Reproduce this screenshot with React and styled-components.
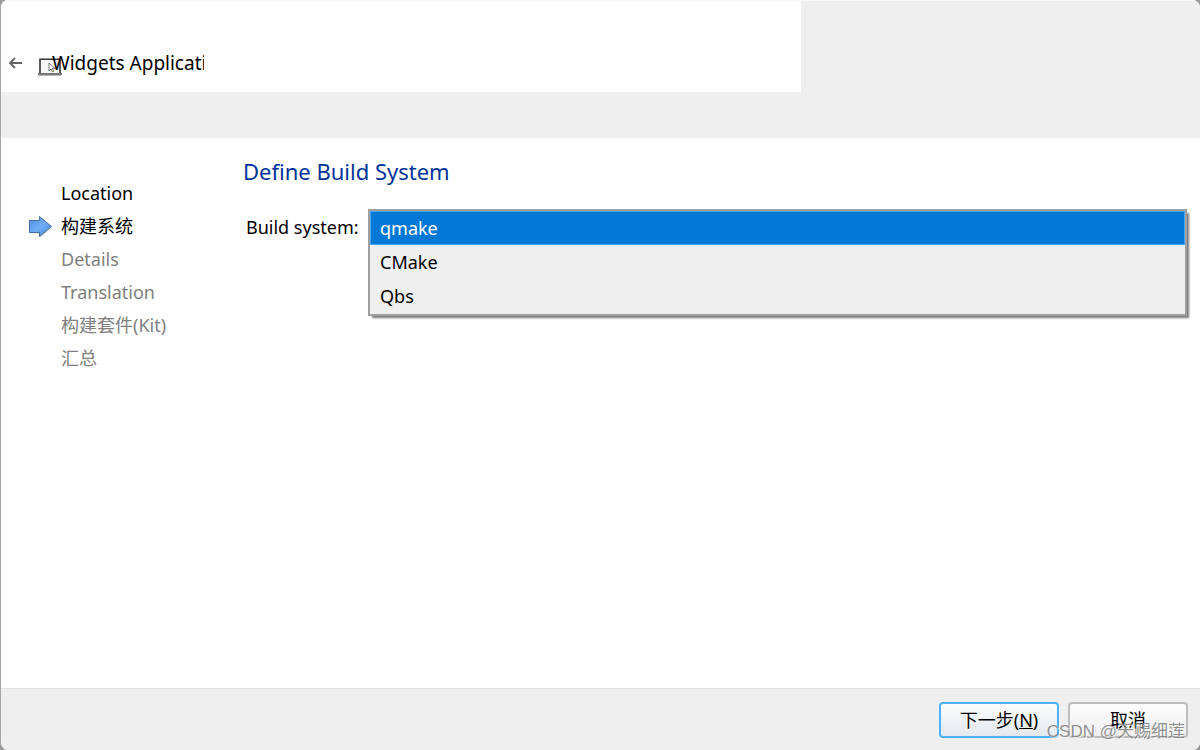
import React, { useState } from "react";
import styled, { createGlobalStyle } from "styled-components";

const GlobalStyle = createGlobalStyle`
    * {
        box-sizing: border-box;
    }

    body {
        margin: 0;
        background: #999;
        color: #000;
        font-family: "Noto Sans", "Noto Sans CJK SC", sans-serif;
        font-size: 18px;
    }
`;

const Window = styled.div`
    position: relative;
    display: flex;
    flex-direction: column;
    min-height: 100vh;
    overflow: hidden;
    background: #fff;
    border-left: 1px solid #a5a5a5;
    border-radius: 8px;
`;

const Header = styled.header`
    height: 138px;
    background: #efefef;
    border-top: 1px solid #f8f8f8;
`;

const TitleBar = styled.div`
    display: flex;
    align-items: center;
    width: 66.7%;
    height: 91px;
    padding: 32px 0 0 7px;
    background: #fff;
`;

const BackButton = styled.button`
    display: flex;
    padding: 0;
    border: none;
    background: none;
`;

const AppIcon = styled.svg`
    flex: none;
    margin: 8px -10px 0 15px;
`;

const WindowTitle = styled.h1`
    width: 152px;
    margin: 0;
    overflow: hidden;
    font-size: 19px;
    font-weight: 400;
    line-height: 28px;
    white-space: nowrap;
`;

const Body = styled.main`
    display: flex;
    flex: 1;
`;

const Steps = styled.ol`
    width: 242px;
    margin: 0;
    padding: 39px 0 0 26px;
    list-style: none;
`;

const Step = styled.li`
    display: grid;
    grid-template-columns: 34px 1fr;
    align-items: center;
    height: 33px;
    line-height: 33px;
    color: ${props => (props.$reached ? "#000" : "#808080")};
`;

const StepName = styled.span`
    grid-column: 2;
`;

const Page = styled.section`
    flex: 1;
    padding: 17px 13px 0 0;
`;

const PageTitle = styled.h2`
    margin: 0;
    color: #003399;
    font-size: 22px;
    font-weight: 400;
    line-height: 32px;
`;

const Field = styled.div`
    display: flex;
    gap: 10px;
    padding: 22px 0 0 3px;
`;

const Label = styled.label`
    width: 112px;
    line-height: 36px;
    white-space: nowrap;
`;

const OptionList = styled.select`
    flex: 1;
    height: 107px;
    padding: 0 0 1px;
    overflow: hidden;
    border: 2px solid #a0a0a0;
    border-radius: 0;
    outline: none;
    background: #efefef;
    box-shadow: 3px 3px 2px -1px #777;
    color: #000;
    font: inherit;
`;

const Option = styled.option`
    height: 34px;
    min-height: 34px;
    padding: 5px 10px 0;
    color: #000;

    &:checked {
        background: #0078d7 linear-gradient(#0078d7, #0078d7);
        box-shadow: inset 0 0 0 1px #42a5f5;
        color: #fff;
    }
`;

const Footer = styled.footer`
    display: flex;
    justify-content: flex-end;
    gap: 9px;
    height: 62px;
    padding: 13px 12px 0;
    background: #efefef;
    border-top: 1px solid #dfdfdf;
`;

const Button = styled.button`
    width: 120px;
    height: 36px;
    padding: 0;
    border: ${props => (props.$primary ? "2px solid #4db2fa" : "2px solid #bdbdbd")};
    border-radius: 4px;
    background: ${props =>
        props.$primary
            ? "linear-gradient(#fdfdfd, #e3e9ee)"
            : "linear-gradient(#fefefe, #eee)"};
    color: #000;
    font: inherit;
    line-height: 30px;
`;

const Watermark = styled.div`
    position: absolute;
    right: 15px;
    bottom: 6px;
    color: rgba(125, 125, 125, 0.85);
    font-family: "Liberation Sans", "Noto Sans CJK SC", sans-serif;
    font-size: 17px;
    line-height: 24px;
    text-shadow: 1px 1px 0 rgba(255, 255, 255, 0.6);
    pointer-events: none;
`;

const steps = [
    { name: "Location", reached: true },
    { name: "构建系统", reached: true, current: true },
    { name: "Details" },
    { name: "Translation" },
    { name: "构建套件(Kit)" },
    { name: "汇总" },
];

const buildSystems = ["qmake", "CMake", "Qbs"];

const BackArrow = () => (
    <svg width="15" height="14" viewBox="0 0 15 14" fill="none" stroke="#666" strokeWidth="1.8">
        <path d="M14 7H2M7 2L2 7l5 5" />
    </svg>
);

const Laptop = () => (
    <AppIcon width="24" height="18" viewBox="0 0 24 18" fill="none">
        <path d="M2 15.5V1.2h20v14.3" fill="#f7f7f7" stroke="#333" strokeWidth="1.6" />
        <path d="M0 15h24v1.5l-1 1H1l-1-1z" fill="#777" />
        <path d="M11 5v8l2-2 1.5 3 1.2-.6-1.4-2.8H17z" fill="#fff" stroke="#555" strokeWidth=".8" />
    </AppIcon>
);

const CurrentArrow = () => (
    <svg width="26" height="24" viewBox="0 0 26 24">
        <defs>
            <linearGradient id="arrowFill" x1="0" y1="0" x2="1" y2="1">
                <stop offset="0" stopColor="#4c8ee6" />
                <stop offset=".5" stopColor="#70adf5" />
                <stop offset="1" stopColor="#4483d6" />
            </linearGradient>
        </defs>
        <path d="M2 7.5h11V3l12.5 10L13 23v-4.5H2z" fill="#999" opacity=".3" />
        <path d="M2.5 5.5h10v-4l12 10-12 10v-4h-10z" fill="url(#arrowFill)" stroke="#496f9e" />
    </svg>
);

const App = () => {
    const [system, setSystem] = useState("qmake");

    return (
        <>
            <GlobalStyle />
            <Window>
                <Header>
                    <TitleBar>
                        <BackButton type="button" aria-label="Back">
                            <BackArrow />
                        </BackButton>
                        <Laptop />
                        <WindowTitle>Widgets Application</WindowTitle>
                    </TitleBar>
                </Header>
                <Body>
                    <Steps>
                        {steps.map(step => (
                            <Step key={step.name} $reached={step.reached}>
                                {step.current && <CurrentArrow />}
                                <StepName>{step.name}</StepName>
                            </Step>
                        ))}
                    </Steps>
                    <Page>
                        <PageTitle>Define Build System</PageTitle>
                        <Field>
                            <Label htmlFor="build-system">Build system:</Label>
                            <OptionList
                                id="build-system"
                                size={3}
                                value={system}
                                onChange={event => setSystem(event.target.value)}
                            >
                                {buildSystems.map(name => (
                                    <Option key={name} value={name}>{name}</Option>
                                ))}
                            </OptionList>
                        </Field>
                    </Page>
                </Body>
                <Footer>
                    <Button type="button" $primary>下一步(<u>N</u>)</Button>
                    <Button type="button">取消</Button>
                </Footer>
                <Watermark>CSDN @天赐细莲</Watermark>
            </Window>
        </>
    );
};

export default App;
